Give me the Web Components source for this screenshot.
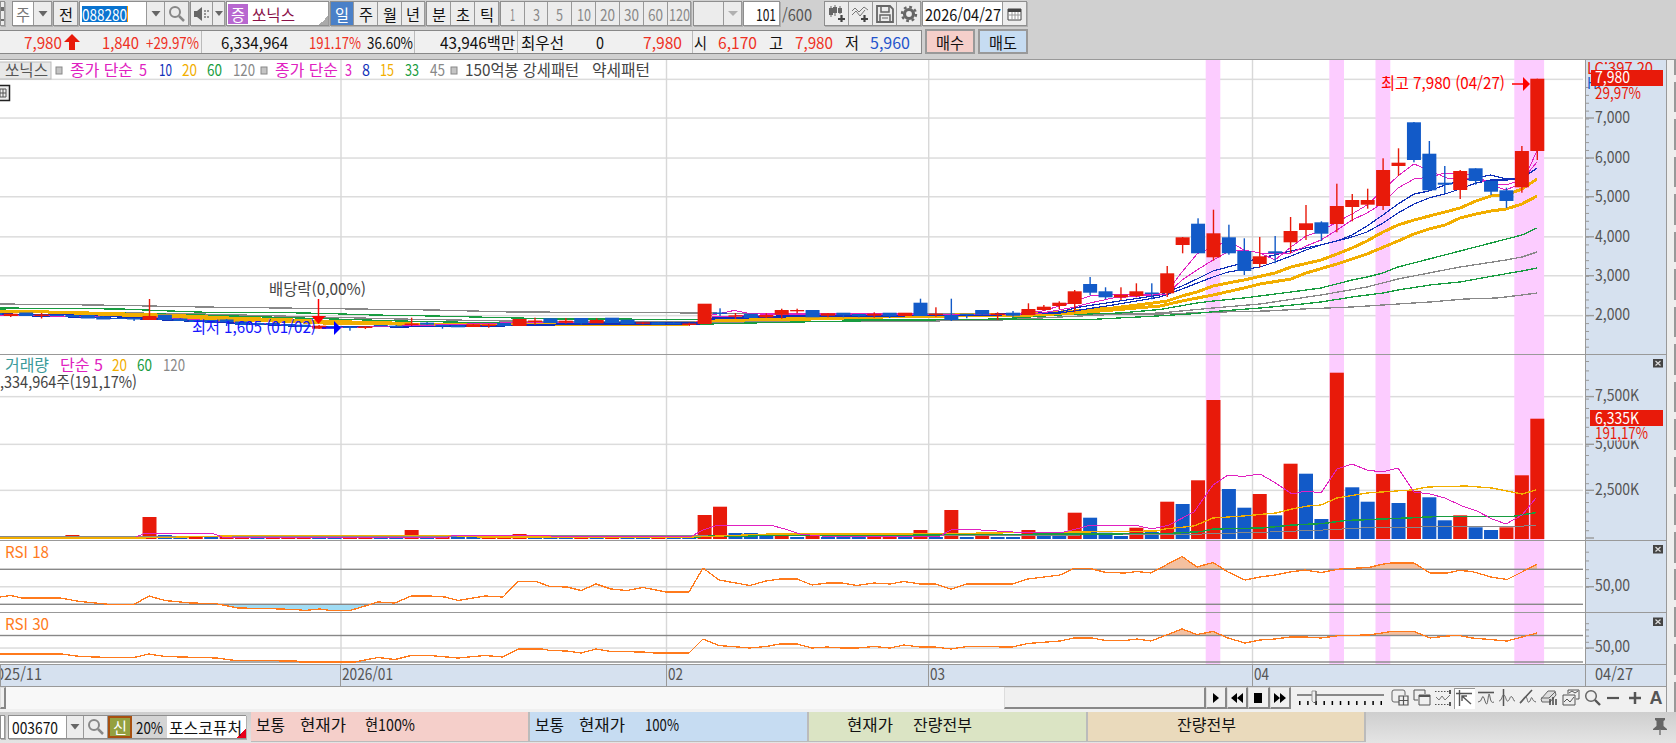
<!DOCTYPE html>
<html lang="ko">
<head>
<meta charset="utf-8">
<title>쏘닉스</title>
<style>
  body {
    margin: 0;
    width: 1676px;
    height: 743px;
    overflow: hidden;
    background: #d0d0d0;
    font-family: "Noto Sans CJK KR", "Liberation Sans", sans-serif;
    font-size: 16px;
    color: #111;
  }
</style>
</head>
<body>
<hts-app></hts-app>

<script>
const RED = '#e81a0a';
const BLUE = '#125ac8';

/* text squeezed to a fixed width, like the narrow bitmap font of the terminal */
class HtsLabel extends HTMLElement {
  connectedCallback() {
    const w = Number(this.getAttribute('w'));
    if (!this.shadowRoot) {
      this.attachShadow({mode: 'open'}).innerHTML = `
        <style>
          :host { display: inline-block; width: ${w}px; height: 20px; line-height: 20px; white-space: nowrap; flex: none; }
          span { display: inline-block; transform-origin: 0 50%; }
        </style>
        <span><slot></slot></span>`;
    }
    const span = this.shadowRoot.querySelector('span');
    span.style.transform = `scaleX(${w / span.getBoundingClientRect().width})`;
  }
}

/* one bordered toolbar cell */
class HtsCell extends HTMLElement {
  connectedCallback() {
    if (this.shadowRoot) return;
    const w = this.getAttribute('w');
    const bg = this.getAttribute('bg') || '#ececec';
    this.attachShadow({mode: 'open'}).innerHTML = `
      <style>
        :host {
          display: flex; flex: none; box-sizing: border-box;
          width: ${w}px; height: 100%;
          align-items: center; justify-content: center;
          background: ${bg};
          border-right: 1px solid #999;
          overflow: hidden;
        }
        :host([start]) { justify-content: flex-start; }
        :host([end]) { justify-content: flex-end; }
      </style>
      <slot></slot>`;
  }
}

/* run of cells that share one frame */
class HtsGroup extends HTMLElement {
  constructor() {
    super();
    this.attachShadow({mode: 'open'}).innerHTML = `
      <style>
        :host { display: flex; flex: none; box-sizing: border-box; height: 100%; border: 1px solid #8e8e8e; border-right: 0; box-shadow: 1px 1px 0 #b0b0b0; }
      </style>
      <slot></slot>`;
  }
}

const ICONS = {
  down: [12, 8, '<path d="M1.500 1h9L6 6.500z" fill="#666"/>'],
  downs: [8, 6, '<path d="M0 0h8L4 5z" fill="#666"/>'],
  downg: [10, 7, '<path d="M0 1h10L5 6z" fill="#b0b0b0"/>'],
  search: [18, 18, '<circle cx="7" cy="7" r="5" fill="none" stroke="#888" stroke-width="2"/><path d="M11 11l5 5" stroke="#888" stroke-width="2.5"/>'],
  searchb: [18, 18, '<circle cx="8" cy="7" r="5.3" fill="none" stroke="#666" stroke-width="1.5"/><path d="M12 11l5 5" stroke="#555" stroke-width="2.4"/>'],
  speaker: [17, 16, '<path d="M1 5h3l5-4v14l-5-4H1z" fill="#666"/><path d="M11 5h2M14 5h2M11 8h2M11 11h2M14 11h2" stroke="#777" stroke-width="1.500"/>'],
  win: [6, 14, '<path d="M0 1h5v12H0M0 3h5" fill="none" stroke="#444" stroke-width="1.6"/>'],
  candle: [19, 18, '<path d="M4 1v11M8 0v11M13 1v8" stroke="#666"/><path d="M2 3h4v7H2zM6 2h4v6H6zM11 3h4v5h-4z" fill="#666"/><path d="M11 14h7M14.500 10v7" stroke="#444" stroke-width="2.200"/>'],
  linep: [19, 18, '<path d="M1 6l3-3 4 4 5-5 4 3M1 10l4-4 4 5 5-6" fill="none" stroke="#777"/><path d="M10 14h7M13.500 10v7" stroke="#444" stroke-width="2.200"/>'],
  save: [18, 18, '<path d="M1 1h13l3 3v13H1z" fill="none" stroke="#666" stroke-width="1.800"/><path d="M5 2v5h8V2M4 16v-6h10v6" fill="none" stroke="#666" stroke-width="1.500"/><path d="M6 13h6" stroke="#666"/>'],
  gear: [18, 18, '<circle cx="9" cy="9" r="4.500" fill="none" stroke="#666" stroke-width="3.200"/><circle cx="9" cy="9" r="7" fill="none" stroke="#666" stroke-width="2.400" stroke-dasharray="2.750 2.750"/>'],
  cal: [16, 14, '<path d="M1 2h13v11H1z" fill="#fff" stroke="#444"/><path d="M1 3.500h13" stroke="#444" stroke-width="3"/><path d="M1 8h13M5 5v8M8 5v8M11 5v8" stroke="#999"/>'],
  up: [16, 16, `<path d="M8 0l8 8h-5v8H5V8H0z" fill="${RED}"/>`],
  play: [8, 10, '<path d="M1 0l6 5-6 5z"/>'],
  rew: [12, 10, '<path d="M6 0v10L0 5zM12 0v10L6 5z"/>'],
  stop: [10, 10, '<path d="M1 0h8v10H1z"/>'],
  ffw: [12, 10, '<path d="M0 0v10l6-5zM6 0v10l6-5z"/>'],
  t1: [18, 18, '<path d="M8 13H3q-2 0-2-2V3q0-2 2-2h9q2 0 2 2v3" fill="none" stroke="#666"/><path d="M8 7h9v9H8zM8 11.500h9M12.500 7v9" fill="none" stroke="#555" stroke-width="1.200"/>'],
  t2: [18, 18, '<path d="M5 11H1V1h11v4" fill="none" stroke="#555"/><path d="M6 6h11v10H6z" fill="#f0f0f0" stroke="#555"/><path d="M6 7h11" stroke="#555" stroke-width="2"/>'],
  t3: [18, 18, '<path d="M1 2.500h15M1 15.500h15" stroke="#555" stroke-dasharray="1.500 1.500"/><path d="M16 1v4M16 13v4" stroke="#555" stroke-width="2"/><path d="M2 8l3 3 3-4 3 4 5-5" fill="none" stroke="#777"/>'],
  t4: [18, 18, '<path d="M1 4.500h16M4.500 1v16M7 7l9 8M7 12V7h5" fill="none" stroke="#555" stroke-width="1.400"/>'],
  t5: [18, 18, '<path d="M1 3.500h16" stroke="#555" stroke-width="1.600"/><path d="M1 13q3 0 4-4t3 3 3-2 2-2 4 5" fill="none" stroke="#666"/>'],
  t6: [18, 18, '<path d="M5.500 0v17" stroke="#555" stroke-width="1.500"/><path d="M1 12c3 0 3-7 5-6s2 7 4 6 2-6 4-4 1 4 3 4" fill="none" stroke="#666"/>'],
  t7: [18, 18, '<path d="M1 14L13 1" stroke="#555" stroke-width="1.600"/><path d="M1 14c3 0 4-8 6-6s1 6 3 5 2-6 3-4 1 3 4 4" fill="none" stroke="#666"/>'],
  t8: [18, 18, '<path d="M1 10l7-8h7l1 4-6 7H2z" fill="#ddd" stroke="#666"/><path d="M1 9h8l6-6" fill="none" stroke="#666"/><path d="M10 10v6M13 8v8M16 10v6" stroke="#444" stroke-width="1.500"/>'],
  t9: [18, 18, '<path d="M6 5V1h11v9h-3" fill="none" stroke="#555"/><path d="M1 6h12v10H1z" fill="#eee" stroke="#555"/><path d="M2 13l3-3 3 3 4-5M7 4l3-2 3 2 3-2" fill="none" stroke="#555"/>'],
  minus: [14, 14, '<path d="M1 7h12" stroke="#555" stroke-width="2.200"/>'],
  plus: [14, 14, '<path d="M1 7h12M7 1v12" stroke="#555" stroke-width="2.500"/>'],
  pin: [14, 18, '<path d="M2 0h10v2l-1.500 1v5l3.500 3v1H0v-1l3.500-3V3L2 2z" fill="#666"/><path d="M7 11v6" stroke="#777" stroke-width="1.500"/>'],
};

class HtsIcon extends HTMLElement {
  constructor() {
    super();
    this.attachShadow({mode: 'open'});
  }
  connectedCallback() {
    const [w, h, body] = ICONS[this.getAttribute('name')];
    this.shadowRoot.innerHTML = `
      <style>:host { display: block; flex: none; width: ${w}px; height: ${h}px; } svg { display: block; }</style>
      <svg width="${w}" height="${h}" viewBox="0 0 ${w} ${h}">${body}</svg>`;
  }
}

const gap = (w) => `<i style="width:${w}px"></i>`;
const cell = (w, text, tw, extra = '') => `<hts-cell w="${w}" ${extra}><hts-label w="${tw}">${text}</hts-label></hts-cell>`;

class HtsToolbar extends HTMLElement {
  constructor() {
    super();
    const minutes = [[24, '1', 5], [23, '3', 7], [24, '5', 7], [24, '10', 14], [24, '20', 15], [24, '30', 15], [24, '60', 15], [23, '120', 21]];
    this.attachShadow({mode: 'open'}).innerHTML = `
      <style>
        :host { display: block; box-sizing: border-box; height: 60px; padding-top: 1px; background: #d0d0d0; border-bottom: 1px solid #999; }
        .row { display: flex; height: 25px; align-items: center; }
        .row + .row { margin-top: 3px; }
        i { flex: none; }
        .gray { color: #888; }
        .name { display: flex; flex: 1; align-items: center; align-self: stretch; background: #fff; }
        .tag { display: flex; align-items: center; justify-content: center; width: 20px; height: 20px; margin: 0 4px 0 1px; background: #b868d0; color: #fff; }
        .corner { width: 9px; height: 9px; margin: 13px 0 0 auto; background: linear-gradient(135deg, transparent 50%, #aaa 50%); }
        .sel { background: #0a74d0; color: #fff; height: 16px; display: flex; align-items: center; border-right: 1px solid #f90; }
        .quote { display: flex; flex: none; height: 24px; box-sizing: border-box; width: 922px; border: 1px solid #888; border-left: 0; background: #f0f0f0; align-items: center; }
        .q { display: flex; box-sizing: border-box; align-items: center; height: 100%; border-right: 1px solid #bbb; }
        .q:last-child { border: 0; }
        .red { color: #ee3024; }
        .blue { color: #2454cc; }
        .btn { box-sizing: border-box; height: 25px; display: flex; align-items: center; justify-content: center; border: 2px solid #999; }
      </style>
      <div class="row">
        <hts-group><hts-cell w="4"><hts-icon name="win"></hts-icon></hts-cell></hts-group>${gap(7)}
        <hts-group>
          ${cell(21, '주', 14, 'bg="#fff" style="color:#777"')}<hts-cell w="18"><hts-icon name="down"></hts-icon></hts-cell>
        </hts-group>${gap(1)}
        <hts-group>${cell(24, '전', 14)}</hts-group>${gap(1)}
        <hts-group>
          <hts-cell w="67" bg="#fff" start><span class="sel" style="margin-left:2px"><hts-label w="45">088280</hts-label></span></hts-cell>
          <hts-cell w="18"><hts-icon name="down"></hts-icon></hts-cell>
          <hts-cell w="24"><hts-icon name="search"></hts-icon></hts-cell>
        </hts-group>${gap(1)}
        <hts-group>
          <hts-cell w="22"><hts-icon name="speaker"></hts-icon></hts-cell>
          <hts-cell w="12"><hts-icon name="downs"></hts-icon></hts-cell>
        </hts-group>${gap(1)}
        <hts-group>
          <hts-cell w="102" bg="#fff" start>
            <div class="name"><span class="tag"><hts-label w="14">증</hts-label></span><hts-label w="43" style="color:#8a1048">쏘닉스</hts-label><span class="corner"></span></div>
          </hts-cell>
        </hts-group>${gap(1)}
        <hts-group>
          ${cell(23, '일', 14, 'bg="#4a80c8" style="color:#fff"')}${cell(24, '주', 14)}${cell(24, '월', 14)}${cell(23, '년', 14)}
        </hts-group>${gap(1)}
        <hts-group>${cell(24, '분', 14)}${cell(24, '초', 14)}${cell(24, '틱', 14)}</hts-group>${gap(1)}
        <hts-group class="gray">${minutes.map(([w, t, tw]) => cell(w, t, tw)).join('')}</hts-group>${gap(2)}
        <hts-group><hts-cell w="30"></hts-cell><hts-cell w="18"><hts-icon name="downg"></hts-icon></hts-cell></hts-group>${gap(1)}
        <hts-group>${cell(36, '101', 20, 'bg="#fff" end style="padding-right:3px"')}</hts-group>${gap(2)}
        <hts-label w="30" style="color:#555">/600</hts-label>${gap(12)}
        <hts-group>
          <hts-cell w="24"><hts-icon name="candle"></hts-icon></hts-cell>
          <hts-cell w="24"><hts-icon name="linep"></hts-icon></hts-cell>
          <hts-cell w="24"><hts-icon name="save"></hts-icon></hts-cell>
          <hts-cell w="24"><hts-icon name="gear"></hts-icon></hts-cell>
        </hts-group>${gap(1)}
        <hts-group>${cell(80, '2026/04/27', 76, 'bg="#fff"')}<hts-cell w="24"><hts-icon name="cal"></hts-icon></hts-cell></hts-group>
      </div>
      <div class="row">
        <div class="quote">
          <div class="q red" style="width:202px">${gap(24)}<hts-label w="38">7,980</hts-label>${gap(2)}<hts-icon name="up"></hts-icon>${gap(22)}<hts-label w="37">1,840</hts-label>${gap(7)}<hts-label w="53">+29.97%</hts-label></div>
          <div class="q" style="width:213px">${gap(19)}<hts-label w="67">6,334,964</hts-label>${gap(21)}<hts-label class="red" w="52">191.17%</hts-label>${gap(6)}<hts-label w="46">36.60%</hts-label></div>
          <div class="q" style="width:103px">${gap(25)}<hts-label w="75">43,946백만</hts-label></div>
          <div class="q" style="width:175px">${gap(3)}<hts-label w="43">최우선</hts-label>${gap(32)}<hts-label w="8">0</hts-label>${gap(39)}<hts-label class="red" w="39">7,980</hts-label></div>
          <div class="q">${gap(1)}<hts-label w="13">시</hts-label>${gap(11)}<hts-label class="red" w="39">6,170</hts-label>${gap(12)}<hts-label w="14">고</hts-label>${gap(12)}<hts-label class="red" w="38">7,980</hts-label>${gap(12)}<hts-label w="14">저</hts-label>${gap(11)}<hts-label class="blue" w="40">5,960</hts-label></div>
        </div>
        ${gap(3)}<div class="btn" style="width:50px;background:#f5cfca"><hts-label w="28">매수</hts-label></div>
        ${gap(3)}<div class="btn" style="width:50px;background:#c6dcf2"><hts-label w="28">매도</hts-label></div>
      </div>`;
  }
}

const CX = (k) => 1537.3 - 15.42 * k;

/* newest first: colour, body top, body bottom, high, low */
const CANDLES = `
r 78.7 151 78.7 160|r 151 187.3 146 192.7|b 190.3 201 187.7 208|b 181 191.7 181 195|b 168.3 181 168.3 184.7
r 171 190 170 199|b 182.7 184.7 166 193.3|b 153.7 190.3 141 190|b 122.3 160 122 162.3|r 162.7 166 148.3 176
r 170 206 158.3 210|r 200 204.7 188.7 208.7|r 200 207 194 221.3|r 206 224 183.7 232.3|b 222.3 233.7 221.3 241
r 223.3 230 205 240|r 231 242.3 217 253|b 251.3 253.3 236 263.3|r 256.3 264 237 267.3|b 251 271 238.3 275
b 237.3 253.3 224.7 254.7|r 233.3 257.3 209.7 260.7|b 223.7 253.3 218.3 253|r 237.3 245 237 253.3|r 273.3 293.3 266 297
b 292.5 294 283.3 299.3|r 291.3 296 283.3 297.3|r 294.7 297.3 287.3 300|b 291.3 297.3 287.3 299.3|b 284 292.7 277 295.3
r 291.3 304 290 312.3|r 302.7 306 301.3 309|r 306.7 310 305 310.7|r 309 315 303.3 315|b 312.7 315.7 311 316.7
r 313.5 315 312.3 320|b 310 314.7 310 315|b 313.7 315 314 318.3|b 315 320 298.7 321|r 313.7 315 307.3 316.7
b 302.7 316 298.7 316|r 312.7 316 313 316|b 312.7 316 313 318|r 313.7 315.7 312.3 317.7|b 314 316 314 317.3
b 312.7 315.3 313 317.3|r 313.3 315.7 313 317.3|b 310 317.3 310 317|r 310 311.3 308.7 313.3|r 310 314.7 308.7 318.7
r 315 317.3 313.3 318|b 313.7 318 314 318|r 315.3 316.7 313 319|b 312.5 314 308.3 316|r 303.7 324 304 324
r 323.5 325 322.7 326|b 322.7 324.3 322 324|b 322.3 324.7 322 324|r 322.3 323.7 322 324.3|b 319.7 324 320 324
b 317.7 323 318 323|r 320 323.3 318.3 323|b 318 323.3 318 324.7|r 320.7 322.7 318 323.7|b 318.3 323 318 323
r 320.5 322 317.7 325|r 319 326 319 326|b 323 326 323 326|r 324.5 326 324 327.7|r 324.3 327 324 327
b 325.3 327.3 325 327|b 325 326.3 325 328.7|b 322.7 324.7 322 325|r 323.5 325 317.7 326|b 325.7 327 325 327
b 325 326.3 325 326|r 326.5 328 326 329|b 326.7 328 326 330.7|b 326 327.5 326 328|r 325.7 328.7 325 329
b 324.7 327 325 327|b 324 326 324 326|b 323 325 323 325|b 323 325 323 325|b 321.5 325 321 325
b 319.5 322 319 326|b 320 322.5 320 322|b 320 322 320 322|b 318.5 321 318 321|b 314.7 320 315 320
r 316 320 299 320|b 318 319.5 318 321|b 318 319 318 319|b 316.5 319.5 316 319|b 315 318.5 315 318
b 315 317 315 317|b 314.7 316 315 316|r 314.5 316 313 318.5|b 312.5 316 313 316|r 313.7 316 314 317
b 313 315 313 315`.trim().split(/[|\n]/).map((c) => c.split(' '));

const VOLUMES = `r418.7 r475.3 r527.3 b530 b527.3 r515.3 b520.3 b497.3 r491 b503 r474 b501.7 b487.3 r372.7 b519 b473.7 r463.7 b515.3 r494 b507.7
b489 r400 r480.3 b504 r501.7 b532 r527.7 b536 b532.7 b517.7 r512.7 b536 b536 r530 b537 b537 r534 b537 r510 b537
r530 b537 r536 r537 b537 b537 b537 r536 b537 r534 b536 b533 b533 r506.7 r515 b537 b537 r535 b537 b537
r537 b537 r535 b537 b537 b537 r534 r537 r537 b537 b537 r537 b537 r530 b537 b537 r537 r537 b537 b537
r537 r537 r537 b537 r537 r537 b537 r537 b537 b535 r517 b537 b537 b537 b537 r535 b537 r537 b537 r537 b537`
  .split(/\s+/).map((v) => [v[0], Number(v.slice(1))]);

const tone = (c) => (c === 'r' ? RED : BLUE);
const line = (pts, color, w = 1) => `<polyline points="${pts}" fill="none" stroke="${color}" stroke-width="${w}" shape-rendering="crispEdges"/>`;
const text = (x, mid, w, s, color = '#555', size = 16) =>
  `<text x="${x}" y="${mid + size * 0.365}" textLength="${w}" lengthAdjust="spacingAndGlyphs" font-size="${size}" fill="${color}">${s}</text>`;
const rect = (x, y, w, h, fill, more = '') => `<rect x="${x}" y="${y}" width="${w}" height="${h}" fill="${fill}" ${more}/>`;
const grid = (ys) => ys.map((y) => rect(0, y - 0.7, 1583, 1.5, '#dcdcdc')).join('');
const months = [341, 666.5, 928.7, 1252.5].map((x) => rect(x - 0.7, 0, 1.4, 743, '#d8d8d8')).join('');
const signals = [[1205.7, 14.6], [1329.3, 14.7], [1375.5, 14.8], [1514.3, 29.8]].map(([x, w]) => rect(x, 0, w, 743, '#fcccff')).join('');
const mark = (x) => rect(x, 67, 6, 7, '#c4c4c4', 'stroke="#888"');

const PINK = '#e020c0', NAVY = '#1030b8', GOLD = '#f2ae00', GREEN = '#189c40', GRAY = '#888';

function pricePlot() {
  const candles = CANDLES.map(([c, top, bottom, high, low], k) => {
    const x = CX(k), f = tone(c);
    return rect(x - 0.7, high, 1.4, low - high, f) + rect(x - 7, top, 14, bottom - top, f);
  }).join('');
  return grid([79.3, 118, 158, 196.7, 236.8, 275.7, 315.6]) + months + signals +
    line('0,304 96,305 202,307 280,308 356,309 434,310 511,312 635,312.500 760,313.500 1160,314 1221,312 1267,311 1303,309 1352,307 1398,304 1430,302 1465,299 1497,298 1522,295 1537,293', GRAY, 1.3) +
    line('0,311 200,314 400,319 560,322 700,322 896,321.500 1000,320 1100,315 1160,313 1213,308 1260,304 1321,295 1367,287 1398,279 1429,273 1460,267 1506,260 1522,257 1537,252', GRAY, 1.3) +
    line('0,308 121,309 171,311 211,312.500 279,312.500 327,313.500 373,315 434,316 496,317.500 560,319 696,319.300 880,320 1094,319.300 1157,316 1189,314 1221,311 1260,308 1293,305 1321,302 1352,297 1383,293 1398,290 1430,285 1460,282 1493,276 1522,271 1537,268', GREEN, 1.3) +
    line('0,310 200,315 300,318 400,321 500,323 620,324 696,324.300 772,322.500 850,321 1000,319 1058,315 1120,313 1160,309.500 1197,303 1213,301 1244,298 1291,292 1321,288 1352,280 1367,277 1383,273 1398,267 1429,259 1460,251 1491,243 1522,235 1537,228', GREEN, 1.3) +
    line('0,312 43,311.500 71,314 143,315.500 186,318 229,320 293,321.500 321,323 382,323.500 411,324.500 511,325 580,325 690,324 712,320 813,319 876,317 955,315 1034,314 1074,311 1113,308 1153,303 1167,301 1182,296 1197,292 1213,286 1228,283 1244,280 1275,273 1291,267 1321,260 1337,254 1352,248 1367,241 1383,232 1398,225 1414,220 1445,212 1460,208 1476,201 1491,196 1506,195 1522,189 1537,179', GOLD, 3) +
    line('0,311 71,312.500 143,314.500 186,316 229,318 293,320 321,321.500 382,322.500 411,324 511,324 580,324 700,323 712,321 813,318 955,316 1034,315 1074,313 1113,310 1160,306 1182,301 1213,295 1244,288 1260,284 1291,279 1306,273 1337,264 1352,259 1367,254 1398,241 1414,234 1429,229 1445,225 1460,218 1476,214 1491,211 1506,209 1522,204 1537,196', GOLD, 3) +
    line('0,314 60,314.500 143,318 229,322 290,325 320,327 400,326.500 500,325.500 600,323 700,323 712,319 780,317 900,315 1000,315 1060,312 1080,307 1113,302 1140,298 1160,295 1182,286 1197,279 1213,271 1228,267 1260,258 1275,255 1291,251 1306,248 1321,245 1337,241 1352,235 1367,226 1383,215 1398,204 1414,194 1429,191 1445,185 1460,181 1491,175 1506,179 1522,178 1537,168', NAVY, 1.2) +
    line('0,315 143,319 229,323 290,326 400,327 500,326 600,324 700,324 712,318 780,316 900,316 1000,314 1060,313 1080,310 1113,305 1160,297 1182,289 1213,277 1228,272 1260,267 1275,262 1291,256 1306,250 1321,245 1337,241 1352,237 1367,232 1383,223 1398,213 1414,204 1429,198 1445,194 1460,189 1476,183 1491,180 1506,180 1522,179 1537,168', NAVY, 1.2) +
    line('0,315 100,317 150,317 250,323 330,328 370,327 500,323 600,322 696,322 712,315 734,310.500 750,313.500 830,313 920,314 1010,314 1042,311 1070,303 1090,296 1106,294.500 1153,294 1167,292 1182,272 1197,254 1213,247 1228,241 1244,250 1260,253 1275,260 1291,247 1306,236 1321,231 1337,222 1352,214 1367,205 1383,190 1398,176 1414,164 1426,169 1437,174 1450,179 1476,178 1491,185 1506,190 1522,183 1537,151', PINK) +
    line('712,317 760,315 900,314 1000,315 1042,313 1070,308 1090,303 1113,298 1167,294 1182,280 1197,270 1213,260 1228,252 1244,250 1260,253 1291,253 1306,246 1321,240 1337,230 1352,220 1367,213 1383,203 1398,188 1414,179 1430,177 1445,173 1460,173 1476,176 1491,184 1506,185 1522,180 1537,162', PINK) +
    candles +
    rect(-1, 62, 52, 17, '#e8e8e8', 'stroke="#bbb"') + text(5, 70.5, 43, '쏘닉스') +
    mark(56) + text(70, 70.5, 63, '종가 단순', PINK) + text(139, 70.5, 8, '5', PINK) + text(159, 70.5, 13, '10', NAVY) +
    text(182, 70.5, 15, '20', GOLD) + text(207, 70.5, 15, '60', GREEN) + text(233, 70.5, 22, '120', GRAY) +
    mark(261) + text(275, 70.5, 63, '종가 단순', PINK) + text(345, 70.5, 7, '3', PINK) + text(362, 70.5, 8, '8', NAVY) +
    text(380, 70.5, 14, '15', GOLD) + text(405, 70.5, 14, '33', GREEN) + text(430, 70.5, 15, '45', GRAY) +
    mark(451) + text(465, 70.5, 114, '150억봉 강세패턴', '#444') + text(592, 70.5, 58, '약세패턴', '#444') +
    '<path d="M-2 85.500H9.500V100.500H-2" fill="#eee" stroke="#222" stroke-width="1.500"/><path d="M0 89h6v8H0zM0 93h6M3 89v8" fill="none" stroke="#555"/>' +
    text(269, 289, 97, '배당락(0,00%)', '#444') + text(192, 327, 124, '최저 1,605 (01/02)', '#1414ff') +
    '<path d="M318.500 299v20" stroke="#f00" stroke-width="1.500"/><path d="M311.500 316h14l-7 8z" fill="#f00"/>' +
    '<path d="M322 328h14" stroke="#00f" stroke-width="1.500"/><path d="M334 321v14l7-7z" fill="#00f"/>' +
    text(1381, 83, 124, '최고 7,980 (04/27)', '#f00') +
    '<path d="M1512 84h14" stroke="#f00" stroke-width="1.500"/><path d="M1523 77v14l7-7z" fill="#f00"/>';
}

function volumePlot() {
  return grid([396.6, 444.3, 490.3]) + months + signals +
    VOLUMES.map(([c, y], k) => rect(CX(k) - 7, y, 14, 539 - y, tone(c))).join('') +
    line('0,537 1080,535 1202,534 1270,532 1323,530 1361,528 1418,527.500 1424,526.500 1513,526.500 1536,525.500', GRAY) +
    line('690,537.500 712,536 1080,534 1169,533.500 1202,531.500 1213,529 1262,528 1293,525 1323,523.500 1346,520.500 1407,518 1437,516.500 1513,516.500 1536,512.500', GREEN, 1.5) +
    line('0,538 140,538 248,535.500 450,535.500 480,537 690,537 720,536 770,534 900,534 1080,532 1156,531 1165,529 1194,526 1213,518 1243,516 1276,513 1292,509 1308,506 1321,505 1337,498 1367,493 1411,490 1428,487 1466,486 1492,488 1522,494 1536,490', GOLD, 1.3) +
    line('136,537 143,534 213,533.500 222,537 448,537 452,535.500 480,535.500 690,537 703,530 718,525 770,525 785,529 800,534 820,536 938,537 951,530 965,529 1013,532 1060,533 1080,528 1089,525.500 1137,525.500 1152,529 1169,525 1194,512 1213,485 1228,475 1243,476.500 1260,474 1274,482 1292,494 1306,491 1321,493 1337,469 1352,464 1367,470 1382,472 1398,468 1414,492 1430,494 1445,498 1462,506 1477,511 1492,519 1506,524 1522,515 1536,498', PINK) +
    text(5, 365.5, 44, '거래량', '#3c9a9a') + text(60, 365.5, 43, '단순 5', PINK) + text(112, 365.5, 15, '20', GOLD) + text(137, 365.5, 15, '60', GREEN) + text(163, 365.5, 22, '120', GRAY) +
    text(0, 382, 137, ',334,964주(191,17%)', '#444');
}

function rsiPlot(name, mid, over, half, under, pts, id) {
  const area = (level, color, clip) => `<polygon points="0,${level} ${pts} 1537,${level}" fill="${color}" clip-path="url(#${clip})"/>`;
  return grid([half]) + months + signals +
    `<clipPath id="${id}o"><rect x="0" y="0" width="1583" height="${over}"/></clipPath><clipPath id="${id}u"><rect x="0" y="${under}" width="1583" height="30"/></clipPath>` +
    area(over, '#f4c0a0', id + 'o') + area(under, '#a0dcf4', id + 'u') +
    rect(0, over - 0.7, 1583, 1.4, '#888') + rect(0, under - 0.7, 1583, 1.4, '#888') +
    line(pts, '#ff7a1c', 1.3) + text(5, mid, 44, name, '#ff7a1c');
}

const RSI18 = '0,597 11,595.500 22,598 60,598 80,601.500 110,604.500 134,604.500 149,596 165,600.500 190,603 215,603.500 238,608 265,608.500 295,609.500 305,610.500 320,609 330,610.500 350,610.500 365,606 378,602 395,603 411,596 430,596 445,597 458,600.500 485,596 503,597 518,581.500 536,581.500 550,586.500 567,587 581,590.500 596,584 611,589 627,590.500 643,587.500 666,592 689,592 703,568 719,580 750,585.500 766,581 780,579 797,579 812,585 827,583 842,583 857,585.500 874,583 890,584 904,581.500 920,584 935,584 951,589 967,584 1012,584 1028,579 1060,575 1074,568.500 1090,568.500 1106,572.500 1125,573 1137,571.500 1151,573 1182,556.500 1197,567 1213,562.500 1228,572 1245,580 1260,577 1275,575 1290,572 1305,570 1321,572.500 1340,569 1369,567.500 1381,564.500 1391,563 1414,563 1430,573 1447,573 1459,570.500 1472,571.500 1491,577 1507,579.500 1522,572 1537,564';
const RSI30 = '0,654 62,654 80,656.500 110,657.500 134,657.500 149,654 165,656.500 217,658 235,660.500 296,661 300,662 355,662 378,657.500 395,659.500 411,655.500 430,655.500 458,658 485,655.500 503,657 518,649 542,649 550,650.500 567,651 581,653 596,649 611,651.500 643,652 655,653 689,653 703,639 719,645.500 750,648 766,646.500 780,644 797,644 812,648 827,647 842,648 857,648 874,646.500 890,648 904,645 920,647 935,647 951,649 967,646.500 1012,647 1028,643.500 1060,641 1074,638 1092,638 1106,640.500 1125,640.500 1137,639 1151,641 1182,629 1197,634.500 1213,631.500 1228,638 1245,643 1260,640 1275,639 1290,637 1305,637 1321,638 1340,635.500 1369,635 1382,633 1391,631.500 1414,631.500 1430,638 1447,636 1459,635.500 1472,638 1507,641 1522,637 1537,633';

const tick = (y) => rect(1586, y - 0.7, 8, 1.4, '#999');
const minor = (from, to, step) => {
  let out = '';
  for (let y = from; y < to; y += step) out += rect(1586, y, 3, 1, '#999');
  return out;
};
const closeBox = (y) => rect(1653, y, 10, 8.5, '#444') + `<path d="M1655.500 ${y + 2}l5 4.500m0-4.500l-5 4.500" stroke="#ddd" stroke-width="1.200"/>`;

function priceAxis() {
  return minor(87, 350, 7.87) +
    [[118, '7,000'], [158, '6,000'], [196.7, '5,000'], [236.8, '4,000'], [275.7, '3,000'], [315.6, '2,000']].map(([y, s]) => tick(y) + text(1595, y - 1, 35, s)).join('') +
    text(1587, 68, 66, 'LC:397,20', RED) + text(1587, 83, 14, 'H:', BLUE) +
    rect(1591, 70, 72, 16, RED) + text(1595, 77.5, 35, '7,980', '#fff') + text(1595, 93, 46, '29,97%', RED);
}
function volumeAxis() {
  return minor(361, 538, 9.4) +
    [[396.6, '7,500K'], [444.3, '5,000K'], [490.3, '2,500K']].map(([y, s]) => tick(y) + text(1595, y - 1, 44, s)).join('') + tick(538) +
    rect(1594, 426, 69, 14.5, '#d6e1ef') +
    rect(1590, 410, 73, 16, RED) + text(1595, 418, 44, '6,335K', '#fff') + text(1595, 433, 53, '191,17%', RED) + closeBox(359);
}
function rsiAxis(half, step, close) {
  return minor(half - step * 4, half + 1, step) + tick(half) + text(1595, half - 1.5, 35, '50,00') + closeBox(close);
}

const PANES = {
  price: [60, 355, pricePlot, priceAxis],
  volume: [355, 541, volumePlot, volumeAxis],
  rsi18: [541, 613, () => rsiPlot('RSI 18', 551.7, 569.3, 586.7, 604.3, RSI18, 'a'), () => rsiAxis(586.7, 8.75, 545)],
  rsi30: [613, 665, () => rsiPlot('RSI 30', 623.7, 635.5, 648, 662, RSI30, 'b'), () => rsiAxis(648, 6.2, 617.5)],
};

class HtsPane extends HTMLElement {
  constructor() {
    super();
    this.attachShadow({mode: 'open'});
  }
  connectedCallback() {
    const [top, bottom, plot, axis] = PANES[this.getAttribute('kind')];
    const h = bottom - top - 1;
    this.shadowRoot.innerHTML = `
      <style>
        :host { display: grid; grid-template-columns: 1585px 81px; height: ${h}px; background: #fff; border-bottom: 1px solid #999; }
        svg { display: block; }
        .axis { background: #d6e1ef; box-shadow: inset 1px 0 #999; }
      </style>
      <svg width="1585" height="${h}" viewBox="0 ${top} 1585 ${h}">${plot()}</svg>
      <svg class="axis" width="81" height="${h}" viewBox="1585 ${top} 81 ${h}">${axis()}</svg>`;
  }
}

class HtsDates extends HTMLElement {
  constructor() {
    super();
    this.attachShadow({mode: 'open'}).innerHTML = `
      <style>
        :host { display: grid; grid-template-columns: 340px 326px 262px 324px 333px 1fr; height: 21px; background: #d6e1ef; color: #555; border-bottom: 1px solid #999; }
        div { display: flex; align-items: flex-start; border-left: 1px solid #999; padding-left: 1px; overflow: hidden; }
        div:first-child { border: 0; padding: 0; }
        hts-label { margin-top: -2px; }
      </style>
      <div><hts-label w="46" style="margin-left:-6px">025/11</hts-label></div>
      <div><hts-label w="51">2026/01</hts-label></div>
      <div><hts-label w="15">02</hts-label></div>
      <div><hts-label w="15">03</hts-label></div>
      <div><hts-label w="15">04</hts-label></div>
      <div style="padding-left:9px"><hts-label w="38">04/27</hts-label></div>`;
  }
}

class HtsScroll extends HTMLElement {
  constructor() {
    super();
    const ticks = Array.from({length: 11}, (_, i) => `<rect x="${2 + i * 8.15}" y="14" width="1.500" height="4"/>`).join('');
    const tools = ['t1', 't2', 't3', 't4', 't5', 't6', 't7', 't8', 't9', 'searchb', 'minus', 'plus'];
    this.attachShadow({mode: 'open'}).innerHTML = `
      <style>
        :host { display: flex; height: 25px; background: #f0f0f0; }
        .up { flex: none; box-sizing: border-box; height: 22px; background: #f0f0f0; border: 1px solid #ddd; border-right: 2px solid #888; border-bottom: 2px solid #888; display: flex; align-items: center; justify-content: center; }
        .track { flex: none; width: 998px; height: 22px; background: #f8f8f8; }
        .slider { flex: none; margin: 0 6px 0 6px; }
        .tools { display: flex; align-items: center; height: 22px; }
        .tools span { flex: none; width: 21.3px; display: flex; justify-content: center; }
        .on { background: #fff; box-shadow: inset 1px 1px #999; height: 21px; align-items: center; }
        b { flex: none; width: 21.3px; text-align: center; font: bold 18px "Liberation Sans", sans-serif; color: #555; }
      </style>
      <div class="up" style="width:6px"></div><div class="track"></div><div class="up" style="width:202px"></div>
      ${['play', 'rew', 'stop', 'ffw'].map((n) => `<div class="up" style="width:21.200px"><hts-icon name="${n}"></hts-icon></div>`).join('')}
      <svg class="slider" width="87" height="21" viewBox="0 0 87 21">
        <path d="M0 8h87" stroke="#888" stroke-width="2"/>${ticks}
        <path d="M15 4h4v10l-2 2-2-2z" fill="#f0f0f0" stroke="#999"/><path d="M19 4v10l-2 2" fill="none" stroke="#555"/>
      </svg>
      <div class="tools">${tools.map((n) => `<span class="${n === 't4' ? 'on' : ''}"><hts-icon name="${n}"></hts-icon></span>`).join('')}<b>A</b></div>`;
  }
}

class HtsOrders extends HTMLElement {
  constructor() {
    super();
    this.attachShadow({mode: 'open'}).innerHTML = `
      <style>
        :host { display: flex; box-sizing: border-box; height: 31px; background: linear-gradient(#cecece, #e4e4e4); }
        .code { display: flex; flex: none; width: 251px; height: 24px; margin-top: 3px; }
        i { flex: none; }
        .credit { display: flex; box-sizing: border-box; width: 24px; height: 22px; align-items: center; justify-content: center; background: #94a040; border: 2px solid #a85010; color: #fff; }
        .pct { display: flex; align-items: center; width: 35px; height: 22px; justify-content: center; background: #d4d4d4; }
        .nm { display: flex; align-items: center; flex: 1; height: 22px; padding-left: 2px; background: #fff linear-gradient(135deg, transparent 50%, #e8001c 50%) right bottom / 9px 9px no-repeat; }
        .order { display: flex; flex: none; box-sizing: border-box; align-items: center; height: 30px; padding-bottom: 5px; border-right: 2px solid #bbb; border-bottom: 1px solid #bbb; }
        hts-icon { margin: 6px 9px 0 auto; }
        hts-cell hts-icon { margin: 0; }
      </style>
      <div class="code">
        <hts-group><hts-cell w="4" bg="#fff"></hts-cell></hts-group>${gap(3)}
        <hts-group style="width:238px">
          ${cell(58, '003670', 46, 'bg="#fff" start style="padding-left:3px"')}<hts-cell w="17"><hts-icon name="down"></hts-icon></hts-cell>
          <hts-cell w="24"><hts-icon name="search"></hts-icon></hts-cell>
          <div class="credit"><hts-label w="14">신</hts-label></div><div class="pct"><hts-label w="27">20%</hts-label></div>
          <div class="nm"><hts-label w="73">포스코퓨처</hts-label></div>
        </hts-group>
      </div>
      <div class="order" style="width:279px;background:#f5cfca">${gap(5)}<hts-label w="29">보통</hts-label>${gap(15)}<hts-label w="46">현재가</hts-label>${gap(19)}<hts-label w="50">현100%</hts-label></div>
      <div class="order" style="width:279px;background:#c6dcf2">${gap(5)}<hts-label w="29">보통</hts-label>${gap(15)}<hts-label w="46">현재가</hts-label>${gap(20)}<hts-label w="34">100%</hts-label></div>
      <div class="order" style="width:279px;background:#dbe4c4">${gap(38)}<hts-label w="46">현재가</hts-label>${gap(20)}<hts-label w="59">잔량전부</hts-label></div>
      <div class="order" style="width:278px;background:#eadabc">${gap(89)}<hts-label w="59">잔량전부</hts-label></div>
      <hts-icon name="pin"></hts-icon>`;
  }
}

class HtsApp extends HTMLElement {
  constructor() {
    super();
    this.attachShadow({mode: 'open'}).innerHTML = `
      <style>
        :host { display: block; width: 1676px; height: 743px; }
        .mid { display: grid; grid-template-columns: 1667px 1fr; }
        .chart { border-right: 1px solid #999; }
        /* left edge of the buttons in the neighbouring window */
        .side { background: #eee; display: grid; grid-template-columns: 1fr 2px; overflow: hidden; }
        .edge { grid-column: 2; background: repeating-linear-gradient(#999 0 15px, #eee 15px 22px, #999 22px 37.5px); }
      </style>
      <hts-toolbar></hts-toolbar>
      <div class="mid">
        <div class="chart">
          <hts-pane kind="price"></hts-pane>
          <hts-pane kind="volume"></hts-pane>
          <hts-pane kind="rsi18"></hts-pane>
          <hts-pane kind="rsi30"></hts-pane>
          <hts-dates></hts-dates>
          <hts-scroll></hts-scroll>
        </div>
        <div class="side"><div class="edge"></div></div>
      </div>
      <hts-orders></hts-orders>`;
  }
}

customElements.define('hts-label', HtsLabel);
customElements.define('hts-cell', HtsCell);
customElements.define('hts-group', HtsGroup);
customElements.define('hts-icon', HtsIcon);
customElements.define('hts-toolbar', HtsToolbar);
customElements.define('hts-pane', HtsPane);
customElements.define('hts-dates', HtsDates);
customElements.define('hts-scroll', HtsScroll);
customElements.define('hts-orders', HtsOrders);
customElements.define('hts-app', HtsApp);
</script>
</body>
</html>
